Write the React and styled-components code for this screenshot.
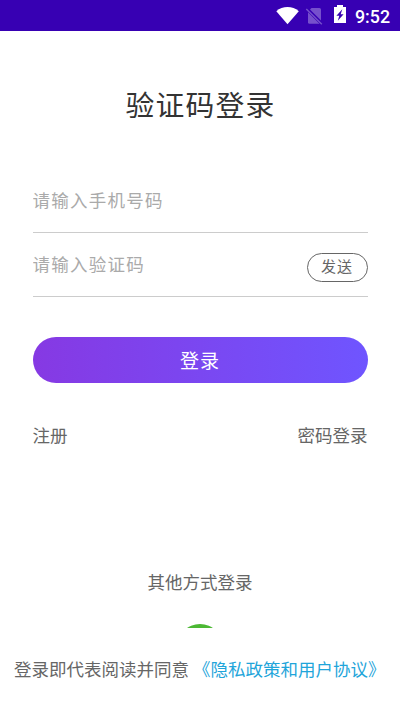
import React from 'react'
import styled, { createGlobalStyle } from 'styled-components'

const GlobalStyle = createGlobalStyle`
* {
    box-sizing: border-box;
}
body {
    margin: 0;
    background: #fff;
    font-family: "Noto Sans CJK SC", Roboto, sans-serif;
}
`

const Screen = styled.div`
    width: 100%;
    height: 711px;
    display: flex;
    flex-direction: column;
    background: #fff;
    overflow: hidden;
`

const StatusBar = styled.header`
    height: 31px;
    flex: none;
    background: #3700b3;
`

const StatusIcons = styled.svg`
    display: block;
    margin-left: auto;
`

const Clock = styled.text`
    font-family: Roboto, sans-serif;
    font-size: 17.8px;
    font-weight: 500;
    fill: #fff;
`

const Content = styled.main`
    height: 597px;
    flex: none;
    padding: 51px 32.5px 0;
    overflow: hidden;
`

const Title = styled.h1`
    margin: 0;
    height: 44px;
    line-height: 44px;
    padding-left: 1px;
    text-align: center;
    font-size: 28.8px;
    font-weight: 400;
    letter-spacing: 1.2px;
    color: #333;
`

const Fields = styled.div`
    margin-top: 44px;
`

const Field = styled.div`
    height: ${props => props.$height}px;
    padding-top: ${props => props.$top}px;
    display: flex;
    align-items: flex-start;
    justify-content: space-between;
    border-bottom: 1px solid #ccc;
`

const Input = styled.input`
    width: 220px;
    height: 26px;
    padding: 0;
    border: 0;
    outline: none;
    background: none;
    font-family: inherit;
    font-size: 17.5px;
    letter-spacing: 1.25px;
    color: #333;
    &::placeholder {
        color: #aaa;
        opacity: 1;
    }
`

const SendButton = styled.button`
    width: 61px;
    height: 29px;
    margin-top: 3px;
    padding: 0 0 4px;
    border: 1px solid #666;
    border-radius: 15px;
    background: none;
    font-family: inherit;
    font-size: 15px;
    letter-spacing: 1px;
    color: #666;
`

const LoginButton = styled.button`
    display: block;
    width: 100%;
    height: 46px;
    margin-top: 40px;
    padding: 0 0 1px;
    border: 0;
    border-radius: 23px;
    background: linear-gradient(90deg, #8639e3, #6f55ff);
    font-family: inherit;
    font-size: 19px;
    letter-spacing: 1px;
    color: #fff;
`

const Links = styled.div`
    display: flex;
    justify-content: space-between;
    margin-top: 39px;
`

const Label = styled.span`
    line-height: 26px;
    font-size: 17.5px;
    color: #666;
`

const OtherWays = styled.section`
    display: flex;
    flex-direction: column;
    align-items: center;
    margin-top: 121px;
`

const WechatIcon = styled.div`
    width: 46px;
    height: 46px;
    flex: none;
    margin-top: 29px;
    border-radius: 50%;
    background: #4cb834;
`

const Agreement = styled.footer`
    padding: 28px 0 0 14px;
    white-space: pre;
`

const Policy = styled.span`
    font-size: 17.5px;
    line-height: 26px;
    color: #1fa5da;
`

const App = () => {
    return (
        <Screen>
            <GlobalStyle />
            <StatusBar>
                <StatusIcons width="130" height="31" viewBox="270 0 130 31">
                    <path d="M276.3 11.2C282.5 5.6 292.5 5.6 298.8 11.2L287.5 24.3Z" fill="#fff" />
                    <g fill="#7650cc">
                        <path d="M311.5 8H319.5Q321 8 321 9.5V20.5L310 9.5Z" />
                        <path d="M308 12.2L319.5 23.8H309.5Q308 23.8 308 22.3Z" />
                    </g>
                    <path d="M306.3 9L321.8 24.2" stroke="#7650cc" strokeWidth="1.4" />
                    <path d="M334 7H337V5H343V7H346V23H334Z" fill="#fff" />
                    <path d="M342.3 9.3L336.4 15.8H339.3L337.8 20.8L343.6 14.2H340.7Z" fill="#3700b3" />
                    <Clock x="355" y="23">9:52</Clock>
                </StatusIcons>
            </StatusBar>
            <Content>
                <Title>验证码登录</Title>
                <Fields>
                    <Field $height={63} $top={16}>
                        <Input placeholder="请输入手机号码" />
                    </Field>
                    <Field $height={64} $top={17}>
                        <Input placeholder="请输入验证码" />
                        <SendButton>发送</SendButton>
                    </Field>
                </Fields>
                <LoginButton>登录</LoginButton>
                <Links>
                    <Label>注册</Label>
                    <Label>密码登录</Label>
                </Links>
                <OtherWays>
                    <Label>其他方式登录</Label>
                    <WechatIcon />
                </OtherWays>
            </Content>
            <Agreement>
                <Label>登录即代表阅读并同意 </Label>
                <Policy>《隐私政策和用户协议》</Policy>
            </Agreement>
        </Screen>
    )
}

export default App
